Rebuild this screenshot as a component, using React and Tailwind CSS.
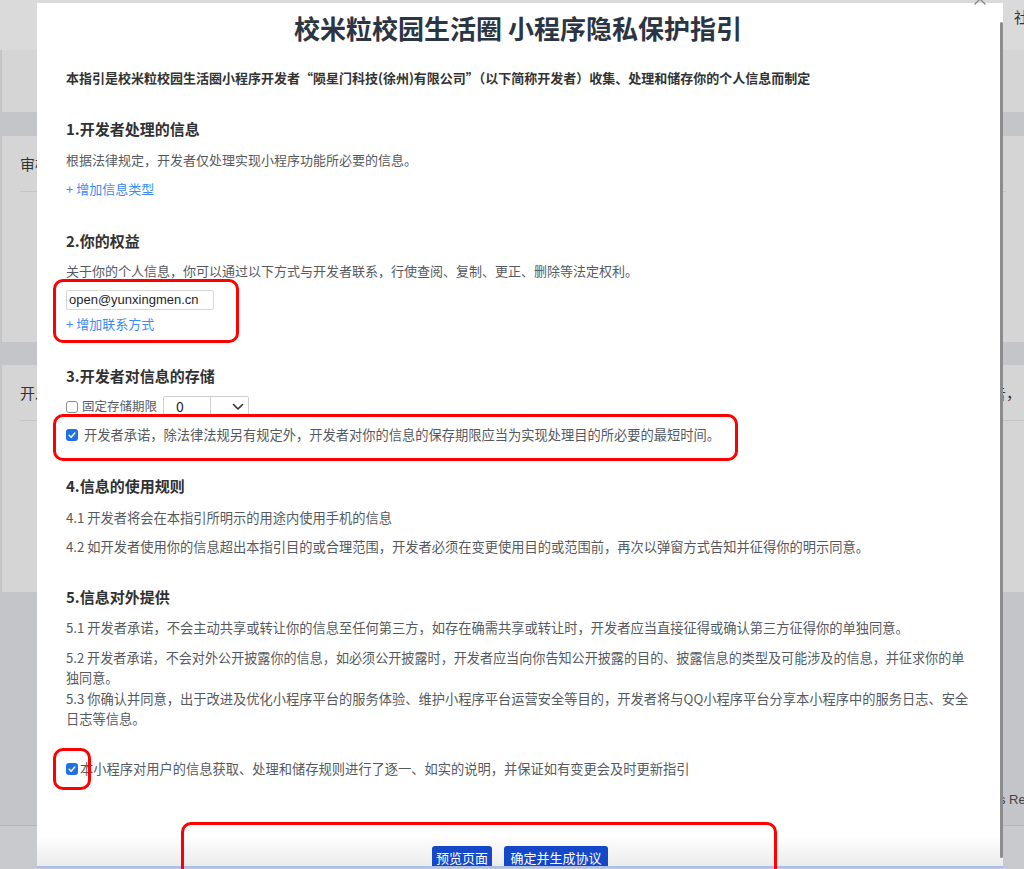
const SANS = "font-['Noto_Sans_CJK_SC','Noto_Sans',sans-serif]";

function Check({ checked }) {
  if (!checked) {
    return <span className="inline-block w-[12px] h-[12px] rounded-[3px] border border-[#8d8d8d] bg-white shrink-0" />;
  }
  return (
    <span className="inline-flex w-[12px] h-[12px] rounded-[3px] bg-[#1f6fe5] items-center justify-center shrink-0">
      <svg viewBox="0 0 12 12" className="w-[10px] h-[10px]">
        <path d="M2.6 6.3 5 8.6 9.4 3.6" fill="none" stroke="white" strokeWidth="1.8" strokeLinecap="round" strokeLinejoin="round" />
      </svg>
    </span>
  );
}

function Heading({ children, className = '' }) {
  return <h2 className={`text-[15px] leading-[22px] font-bold text-[#303133] ${className}`}>{children}</h2>;
}

function Para({ children, className = 'text-[13.25px]' }) {
  return <p className={`leading-[20px] text-[#555a61] ${className}`}>{children}</p>;
}

function RedBox({ className }) {
  return <div className={`absolute border-[3px] border-[#ff0000] rounded-[10px] ${className}`} />;
}

export default function App() {
  return (
    <div className={`relative w-[1024px] h-[869px] overflow-hidden bg-[#c4c5c9] ${SANS}`}>
      {/* page behind the dialog */}
      <div className="h-[50px] bg-[#dadada] pl-[1014px] pt-[7px]">
        <span className="block text-[15px] leading-[20px] text-[#333] whitespace-nowrap">社区管理</span>
      </div>
      <div className="ml-[2px] h-[62px] bg-[#d5d5d5]" />
      <div className="ml-[2px] mt-[24px] h-[206px] bg-[#d5d5d5] px-[18px] pt-[18px]">
        <div className="text-[15px] leading-[20px] text-[#333]">审核状态</div>
        <div className="mt-[17px] h-px bg-[#c4c4c4]" />
      </div>
      <div className="ml-[2px] mt-[23px] h-[227px] bg-[#d5d5d5] pl-[18px] pt-[18px]">
        <div className="flex justify-between text-[15px] leading-[20px] text-[#333]">
          <span>开发设置</span>
          <span className="pr-[3px]">请及时查看公告，</span>
        </div>
        <div className="mt-[17px] h-px bg-[#c4c4c4]" />
      </div>
      <div className="mt-[198px] pl-[999px] text-[13px] leading-[20px] text-[#444] whitespace-nowrap font-['Liberation_Sans',sans-serif]">
        s Reserved
      </div>
      <div className="mt-[15px] h-px bg-[#b4b5b9]" />
      <div className="h-[60px] bg-[#c9cacd]" />

      {/* dialog */}
      <div className="absolute left-[37px] top-[3px] w-[966px] h-[865px] bg-white border-b-2 border-[#a9c0ee] flex flex-col overflow-hidden">
        <div className="flex-1 pl-[29px] pr-[33px] pt-[10px]">
          <h1 className="text-center text-[26px] leading-[30px] font-bold text-[#2b3543]">校米粒校园生活圈 小程序隐私保护指引</h1>
          <p className="mt-[25px] text-[13px] leading-[20px] font-bold text-[#333]">
            本指引是校米粒校园生活圈小程序开发者“陨星门科技(徐州)有限公司”（以下简称开发者）收集、处理和储存你的个人信息而制定
          </p>

          <Heading className="mt-[30px]">1.开发者处理的信息</Heading>
          <Para className="mt-[10px] text-[13px]">根据法律规定，开发者仅处理实现小程序功能所必要的信息。</Para>
          <div className="mt-[9px] text-[13px] leading-[20px] text-[#3f8cf0]">+ 增加信息类型</div>

          <Heading className="mt-[31px]">2.你的权益</Heading>
          <Para className="mt-[9px] text-[13px]">关于你的个人信息，你可以通过以下方式与开发者联系，行使查阅、复制、更正、删除等法定权利。</Para>
          <div className="mt-[9px] w-[148px] h-[20px] border border-[#d9d9d9] rounded-[2px] pl-[2px] flex items-center text-[13px] text-[#1f1f1f] font-['Liberation_Sans',sans-serif]">
            open@yunxingmen.cn
          </div>
          <div className="mt-[4px] text-[13px] leading-[20px] text-[#3f8cf0]">+ 增加联系方式</div>

          <Heading className="mt-[31px]">3.开发者对信息的存储</Heading>
          <div className="mt-[9px] h-[21px] flex items-center">
            <Check />
            <span className="ml-[4px] text-[12.5px] text-[#555a61]">固定存储期限</span>
            <div className="ml-[6px] flex h-[21px] border border-[#cfcfcf] rounded-[2px]">
              <span className="w-[46px] pl-[12px] text-[14px] leading-[19px] text-[#222]">0</span>
              <span className="w-[38px] border-l border-[#cfcfcf] flex items-center justify-end pr-[4px]">
                <svg viewBox="0 0 12 8" className="w-[12px] h-[8px]">
                  <path d="M1.5 1.5 6 6 10.5 1.5" fill="none" stroke="#333" strokeWidth="1.6" strokeLinecap="round" strokeLinejoin="round" />
                </svg>
              </span>
            </div>
          </div>
          <div className="mt-[8px] h-[20px] flex items-center">
            <Check checked />
            <span className="ml-[6px] text-[13.25px] text-[#555a61]">开发者承诺，除法律法规另有规定外，开发者对你的信息的保存期限应当为实现处理目的所必要的最短时间。</span>
          </div>

          <Heading className="mt-[30px]">4.信息的使用规则</Heading>
          <Para className="mt-[11px] text-[13.25px]">4.1 开发者将会在本指引所明示的用途内使用手机的信息</Para>
          <Para className="mt-[9px] text-[13.25px]">4.2 如开发者使用你的信息超出本指引目的或合理范围，开发者必须在变更使用目的或范围前，再次以弹窗方式告知并征得你的明示同意。</Para>

          <Heading className="mt-[29px]">5.信息对外提供</Heading>
          <Para className="mt-[10px] text-[13.25px]">5.1 开发者承诺，不会主动共享或转让你的信息至任何第三方，如存在确需共享或转让时，开发者应当直接征得或确认第三方征得你的单独同意。</Para>
          <Para className="mt-[10px] text-[13.1px]">5.2 开发者承诺，不会对外公开披露你的信息，如必须公开披露时，开发者应当向你告知公开披露的目的、披露信息的类型及可能涉及的信息，并征求你的单独同意。</Para>
          <Para className="mt-[1px] text-[13.25px]">5.3 你确认并同意，出于改进及优化小程序平台的服务体验、维护小程序平台运营安全等目的，开发者将与QQ小程序平台分享本小程序中的服务日志、安全日志等信息。</Para>

          <div className="mt-[30px] h-[20px] flex items-center">
            <Check checked />
            <span className="ml-[2px] text-[13.25px] text-[#555a61]">本小程序对用户的信息获取、处理和储存规则进行了逐一、如实的说明，并保证如有变更会及时更新指引</span>
          </div>
        </div>

        <div className="h-[31px] shrink-0 bg-linear-to-b from-white to-[#ebebeb] flex justify-center gap-[12px] pt-[11px]">
          <button className="w-[60px] h-[24px] rounded-[3px] bg-[#1448c9] text-white text-[13px] leading-[22px]">预览页面</button>
          <button className="w-[104px] h-[24px] rounded-[3px] bg-[#1448c9] text-white text-[13px] leading-[22px]">确定并生成协议</button>
        </div>
      </div>

      {/* dialog scrollbar and close */}
      <div className="absolute left-[1000px] top-[22px] w-[3px] h-[836px] bg-[#8c8c8c] rounded-full" />
      <svg viewBox="0 0 14 14" className="absolute left-[973px] top-[-8px] w-[14px] h-[14px]">
        <path d="M2 2 12 12M12 2 2 12" stroke="#8a8a8a" strokeWidth="1.4" strokeLinecap="round" />
      </svg>

      {/* annotation boxes */}
      <RedBox className="left-[53px] top-[279px] w-[186px] h-[64px]" />
      <RedBox className="left-[53px] top-[414px] w-[685px] h-[47px]" />
      <RedBox className="left-[53px] top-[748px] w-[38px] h-[42px]" />
      <RedBox className="left-[181px] top-[822px] w-[596px] h-[70px]" />
    </div>
  );
}
